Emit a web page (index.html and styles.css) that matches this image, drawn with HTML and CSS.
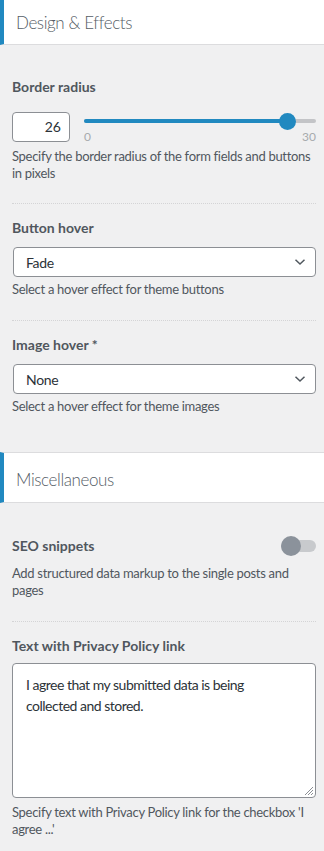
FILE: index.html
```html
<!DOCTYPE html>
<html>
<head>
<meta charset="utf-8">
<link rel="stylesheet" href="styles.css">
</head>
<body>
<div class="section-head section-head-top"><h3>Design &amp; Effects</h3></div>
<div class="controls">
  <div class="control control-first control-range">
    <div class="label">Border radius</div>
    <div class="range-row">
      <div class="num">26</div>
      <div class="slider">
        <div class="track"><div class="fill" style="width: 87.5%"></div><div class="thumb" style="left: 87.5%"></div></div>
        <div class="scale"><span>0</span><span>30</span></div>
      </div>
    </div>
    <div class="desc">Specify the border radius of the form fields and buttons in pixels</div>
  </div>
  <div class="control">
    <div class="label">Button hover</div>
    <div class="select"><span>Fade</span><svg class="chev" width="12" height="8" viewBox="0 0 12 8"><path d="M1.5 1.8 L6 6 L10.5 1.8" fill="none" stroke="#50575e" stroke-width="1.5"/></svg></div>
    <div class="desc">Select a hover effect for theme buttons</div>
  </div>
  <div class="control last">
    <div class="label">Image hover *</div>
    <div class="select"><span>None</span><svg class="chev" width="12" height="8" viewBox="0 0 12 8"><path d="M1.5 1.8 L6 6 L10.5 1.8" fill="none" stroke="#50575e" stroke-width="1.5"/></svg></div>
    <div class="desc">Select a hover effect for theme images</div>
  </div>
</div>
<div class="section-head section-head-mid"><h3>Miscellaneous</h3></div>
<div class="controls">
  <div class="control control-first2">
    <div class="label-row">
      <div class="label">SEO snippets</div>
      <div class="toggle"><div class="knob"></div></div>
    </div>
    <div class="desc">Add structured data markup to the single posts and pages</div>
  </div>
  <div class="control last">
    <div class="label">Text with Privacy Policy link</div>
    <div class="textarea">I agree that my submitted data is being collected and stored.<svg class="grip" width="12" height="12" viewBox="0 0 12 12"><path d="M11 3 L3 11 M11 6 L6 11 M11 9 L9 11" stroke="#8c8f94" stroke-width="1"/></svg></div>
    <div class="desc desc-after-area">Specify text with Privacy Policy link for the checkbox 'I agree ...'</div>
  </div>
</div>
</body>
</html>
```
FILE: styles.css
```css
* { box-sizing: border-box; }
body {
  margin: 0;
  background: #f0f0f1;
  font-family: Lato, "Open Sans", sans-serif;
  color: #50575e;
  width: 324px;
}
.section-head {
  background: #fff;
  border-left: 4px solid #2189c0;
  border-bottom: 1px solid #dcdcde;
  display: flex;
  align-items: center;
  padding-left: 12px;
}
.section-head h3 {
  margin: 0;
  font-size: 17px;
  font-weight: 300;
  letter-spacing: -0.4px;
  color: #555d66;
}
.section-head-top { height: 45px; }
.section-head-mid {
  height: 51px;
  border-top: 1px solid #dcdcde;
  padding-top: 3px;
  margin-top: 37px;
}
.controls { padding: 0 8px 0 12px; }
.control {
  padding: 14px 0 22px;
  border-bottom: 1px dotted #d4d4d6;
}
.control-first { padding-top: 32px; }
.control-first2 { padding-top: 33px; }
.control-range { padding-bottom: 21px; }
.control.last { border-bottom: none; padding-bottom: 0; }
.label {
  font-size: 14px;
  font-weight: 700;
  line-height: 20px;
  color: #50575e;
  margin-bottom: 9px;
}
.range-row {
  display: flex;
  align-items: flex-start;
  gap: 14px;
  height: 32px;
  margin-top: 15px;
}
.num {
  width: 58px;
  height: 30px;
  flex: none;
  background: #fff;
  border: 1px solid #8c8f94;
  border-radius: 4px;
  text-align: right;
  padding-right: 8px;
  font-size: 14px;
  line-height: 28px;
  color: #2c3338;
}
.slider { flex: 1; padding-top: 7px; }
.track {
  position: relative;
  height: 4px;
  border-radius: 2px;
  background: #c3c4c7;
}
.fill {
  height: 4px;
  border-radius: 2px;
  background: #2189c0;
}
.thumb {
  position: absolute;
  top: -6.5px;
  width: 17px;
  height: 17px;
  margin-left: -8.5px;
  border-radius: 50%;
  background: #2189c0;
}
.scale {
  display: flex;
  justify-content: space-between;
  font-size: 12px;
  line-height: 12px;
  color: #a7aaad;
  margin-top: 8px;
}
.desc {
  font-size: 13px;
  line-height: 17px;
  letter-spacing: -0.3px;
  color: #50575e;
  margin-top: 4px;
}
.desc-after-area { margin-top: 6px; }
.select {
  height: 30px;
  margin-left: 1px;
  background: #fff;
  border: 1px solid #8c8f94;
  border-radius: 4px;
  display: flex;
  align-items: center;
  justify-content: space-between;
  padding: 0 9px 0 12px;
  font-size: 14px;
  letter-spacing: -0.3px;
  color: #2c3338;
}
.label-row {
  display: flex;
  justify-content: space-between;
  align-items: center;
  margin-bottom: 9px;
}
.label-row .label { margin-bottom: 0; }
.toggle {
  position: relative;
  width: 35px;
  height: 12px;
  border-radius: 6px;
  background: #c8cacd;
}
.knob {
  position: absolute;
  left: 0;
  top: -4px;
  width: 20px;
  height: 20px;
  border-radius: 50%;
  background: #8b929b;
}
.textarea {
  position: relative;
  height: 135px;
  margin-top: -2px;
  background: #fff;
  border: 1px solid #8c8f94;
  border-radius: 4px;
  padding: 10px 40px 0 13px;
  font-size: 14px;
  line-height: 21px;
  letter-spacing: -0.5px;
  color: #2c3338;
}
.grip { position: absolute; right: 1px; bottom: 1px; }
```
